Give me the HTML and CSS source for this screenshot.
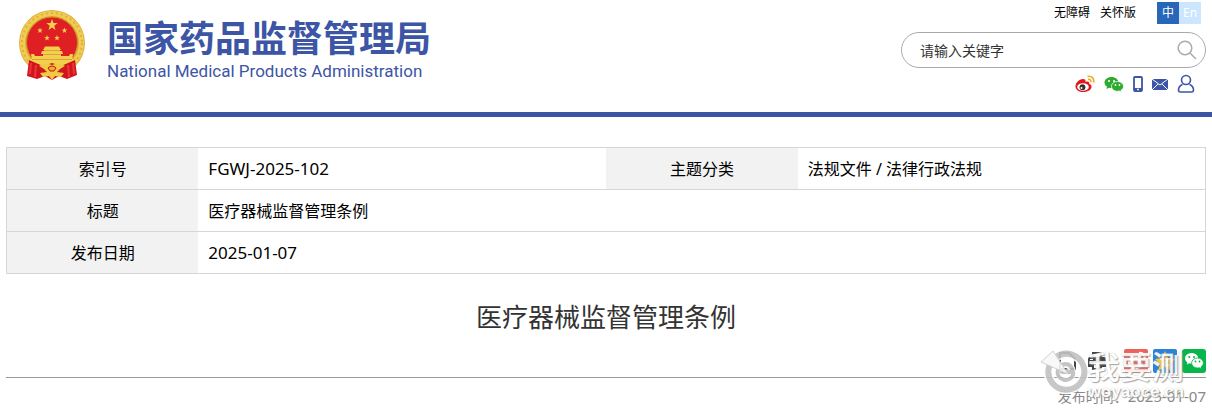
FILE: index.html
```html
<!DOCTYPE html>
<html lang="zh-CN">
<head>
    <meta charset="UTF-8">
    <meta name="viewport" content="width=device-width, initial-scale=1.0">
    <title>医疗器械监督管理条例</title>
    <link rel="stylesheet" href="styles.css">
</head>
<body>
    <header class="header">
        <a class="logo" href="#">
            <svg class="emblem" viewBox="0 0 66 71" aria-hidden="true">
                <defs>
                    <path id="star" d="M0-6 1.4-1.9 5.7-1.9 2.3.7 3.5 4.9 0 2.4-3.5 4.9-2.3.7-5.7-1.9-1.4-1.9Z"/>
                </defs>
                <circle cx="33" cy="33" r="33" fill="#dfb038"/>
                <circle cx="33" cy="33" r="29.500" fill="none" stroke="#efcd55" stroke-width="5"/>
                <circle cx="33" cy="33" r="30" fill="none" stroke="#e0b03a" stroke-width="2" stroke-dasharray="2 3"/>
                <circle cx="33" cy="32.500" r="25.500" fill="#e01f24" stroke="#c98f20"/>
                <g fill="#f3cf4e">
                    <use href="#star" x="33" y="15"/>
                    <use href="#star" transform="translate(21 20.500) scale(.5)"/>
                    <use href="#star" transform="translate(45.500 20.500) scale(.5)"/>
                    <use href="#star" transform="translate(28 28) scale(.5)"/>
                    <use href="#star" transform="translate(38 28) scale(.5)"/>
                    <path d="M26 36.500h14l2 3.500H24zM23 41h20l1 3H22zM24 44h18v4H24z"/>
                    <path d="M12 44h3l1 2h34l1-2h3l-1 6H13z"/>
                    <path d="M11 49h44l-3 6H14z"/>
                </g>
                <path d="M25 40.500h16M24 44.500h18M13 49.500h40" stroke="#dda338"/>
                <path d="M10 50 24 56 33 53 42 56 56 50 58 65 48 69 40 66 33 70 26 66 18 69 8 66Z" fill="#cf161c"/>
                <path d="M12 53l-1 11M17 55l-1 12M54 53l1 11M49 55l1 12" stroke="#ed3439" stroke-width="2"/>
                <path d="M20 56q6-4 13-1 7-3 13 1l-5 3-3 3 7 1-3 4-6-1-3 4-3-4-6 1-3-4 7-1-3-3z" fill="#f1c944"/>
                <path d="M29 58q4-4 8 0l-2 3h-4z" fill="#e9ae2e" stroke="#c8141c"/>
            </svg>
            <span class="logo-text">
                <span class="logo-cn">国家药品监督管理局</span>
                <span class="logo-en">National Medical Products Administration</span>
            </span>
        </a>

        <div class="tools">
            <div class="top-links">
                <a href="#">无障碍</a>
                <a href="#">关怀版</a>
                <div class="lang">
                    <a class="lang-cn" href="#">中</a><a class="lang-en" href="#">En</a>
                </div>
            </div>
            <form class="search">
                <input type="text" aria-label="搜索" placeholder="请输入关键字">
                <button type="button" aria-label="搜索">
                    <svg viewBox="0 0 20 20" width="20" height="20" fill="none" stroke="#aaa" stroke-width="1.500">
                        <circle cx="8" cy="8" r="6.800"/>
                        <path d="M13 13l6 6"/>
                    </svg>
                </button>
            </form>
            <nav class="social">
                <a href="#" aria-label="微博">
                    <svg viewBox="0 0 20 18" width="20" height="18">
                        <path d="M8 4C4 4 .5 8 .5 11.500S4 17 8.500 17s8-2.500 8-5.300c0-1.700-1.200-2.300-2.300-2.700.6-2-1-3-3.700-2C11 5 9.800 4 8 4z" fill="#e3141b"/>
                        <ellipse cx="8" cy="12" rx="5.800" ry="3.800" fill="#fff"/>
                        <circle cx="7.500" cy="12.200" r="2.900" fill="#333"/>
                        <circle cx="6.500" cy="13" r="1" fill="#fff"/>
                        <path d="M12.500 1.500c4-1 7 2 6 6M13 4.500c2-.4 3.300.8 2.800 2.800" fill="none" stroke="#efa928" stroke-width="1.600"/>
                    </svg>
                </a>
                <a href="#" aria-label="微信">
                    <svg viewBox="0 0 20 18" width="20" height="18">
                        <path d="M7.500 2C3.500 2 .5 4.500.5 7.500c0 1.800 1 3.200 2.500 4.200L2.500 14l2.600-1.300c.8.200 1.600.3 2.400.3 4 0 7-2.500 7-5.500S11.500 2 7.500 2z" fill="#2dab2e"/>
                        <path d="M13.500 6.500c-3.300 0-6 2.100-6 4.900s2.700 4.900 6 4.900c.7 0 1.400-.1 2-.3l2 1.200-.5-2c1.500-.9 2.500-2.200 2.500-3.800 0-2.800-2.700-4.900-6-4.900z" fill="#2dab2e" stroke="#fff" stroke-width=".8"/>
                        <g fill="#fff"><circle cx="5" cy="6" r="1"/><circle cx="10" cy="6" r="1"/><circle cx="11.500" cy="10" r=".9"/><circle cx="15.500" cy="10" r=".9"/></g>
                    </svg>
                </a>
                <a href="#" aria-label="手机版">
                    <svg viewBox="0 0 10 18" width="10" height="18">
                        <rect x="1" y="2" width="8" height="14" rx="1" fill="none" stroke="#3c55a5" stroke-width="1.800"/>
                        <path d="M1 13h8v3H1z" fill="#3c55a5"/>
                        <circle cx="5" cy="14.500" r=".9" fill="#fff"/>
                    </svg>
                </a>
                <a href="#" aria-label="邮箱">
                    <svg viewBox="0 0 16 18" width="16" height="18">
                        <path d="M0 4h16v11H0z" fill="#3c55a5"/>
                        <path d="M0 4l8 6 8-6M0 15l6-6M16 15l-6-6" fill="none" stroke="#fff"/>
                    </svg>
                </a>
                <a href="#" aria-label="用户">
                    <svg viewBox="0 0 18 20" width="18" height="20" fill="none" stroke="#3c55a5" stroke-width="1.600">
                        <circle cx="9" cy="6" r="4.500"/>
                        <path d="M5.500 10.500C3 11.500 1.500 14 1.500 16q0 2 2 2h11q2 0 2-2c0-2-1.500-4.500-4-5.500"/>
                    </svg>
                </a>
            </nav>
        </div>
    </header>

    <main class="container">
        <table class="info">
            <tr>
                <th scope="row">索引号</th>
                <td class="code">FGWJ-2025-102</td>
                <th scope="row">主题分类</th>
                <td>法规文件 / 法律行政法规</td>
            </tr>
            <tr>
                <th scope="row">标题</th>
                <td colspan="3">医疗器械监督管理条例</td>
            </tr>
            <tr>
                <th scope="row">发布日期</th>
                <td class="code" colspan="3">2025-01-07</td>
            </tr>
        </table>

        <h1>医疗器械监督管理条例</h1>

        <div class="article-meta">
            <div class="share">
                <button type="button" aria-label="收藏">
                    <svg viewBox="0 0 20 24" width="20" height="24" fill="none" stroke="#444" stroke-width="2">
                        <path d="M3 4h9l6 6v10H3z"/>
                    </svg>
                </button>
                <button type="button" class="print" aria-label="打印">
                    <svg viewBox="0 0 20 24" width="20" height="24">
                        <path d="M5 3h10v5h2q2 0 2 2v8h-4v3H5v-3H1v-8q0-2 2-2h2z" fill="#444"/>
                        <path d="M7 5h6v3H7zM7 14h6v5H7zM3 10h3v1H3z" fill="#fff"/>
                    </svg>
                </button>
                <button type="button" aria-label="分享到微博">
                    <svg viewBox="0 0 24 24" width="24" height="24">
                        <rect width="24" height="24" rx="2" fill="#ee6259"/>
                        <path d="M4 14c0-4 5-8 8-7 2 0 2 2 1 3 4-1 5 1 4 3 2 1 2 3 0 5-4 4-13 2-13-4z" fill="#fff"/>
                        <ellipse cx="11" cy="15" rx="5" ry="3" fill="#ee6259"/>
                        <path d="M15 4c4-1 7 3 5 6" fill="none" stroke="#fff" stroke-width="2"/>
                    </svg>
                </button>
                <button type="button" aria-label="分享到QQ空间">
                    <svg viewBox="0 0 24 24" width="24" height="24">
                        <rect width="24" height="24" rx="2" fill="#2b82d9"/>
                        <path d="M12 2l3 7 7 1-5 5 2 7-7-4-7 4 2-7-5-5 7-1z" fill="#fbc62d"/>
                        <path d="M7 10h9l-7 6h8" fill="none" stroke="#fff" stroke-width="1.500"/>
                    </svg>
                </button>
                <button type="button" aria-label="分享到微信">
                    <svg viewBox="0 0 24 24" width="24" height="24">
                        <rect width="24" height="24" rx="3" fill="#07b64a"/>
                        <path d="M9.500 4C6 4 3 6.300 3 9.300c0 1.700.9 3.100 2.300 4L5 15.500l2.400-1.200c4.500 1 8.800-1.300 8.800-5C16.200 6.300 13.200 4 9.500 4z" fill="#fff"/>
                        <path d="M15.500 9c-3.200 0-5.900 2.200-5.900 5s2.700 5 5.900 5c.7 0 1.300-.1 1.900-.3l2 1.100-.4-2c1.400-.9 2.400-2.200 2.400-3.800 0-2.800-2.700-5-5.900-5z" fill="#fff" stroke="#07b64a" stroke-width=".8"/>
                        <g fill="#07b64a"><circle cx="7.300" cy="8" r="1"/><circle cx="12" cy="8" r="1"/><circle cx="13.500" cy="12.500" r=".9"/><circle cx="17.500" cy="12.500" r=".9"/></g>
                    </svg>
                </button>
            </div>
            <p class="date">发布时间：<span class="date-value">2025-01-07</span></p>

            <div class="watermark">
                <svg viewBox="0 0 48 48" width="48" height="48" aria-hidden="true">
                    <g fill="none" stroke-linecap="round">
                        <path d="M16 9A18 18 0 1 1 9 19" stroke="#fff" stroke-width="9"/>
                        <path d="M16 9A18 18 0 1 1 9 19" stroke="#c2c2c2" stroke-width="6"/>
                        <path d="M20 31A8 8 0 1 0 21 17M19 25h13" stroke="#fff" stroke-width="7"/>
                        <path d="M33 27A8 8 0 1 1 25 16q7 0 8 8H22" stroke="#bdbdbd" stroke-width="4"/>
                    </g>
                    <path d="M1 14 13 3 28 26z" fill="#f8f8f8" stroke="#ccc"/>
                </svg>
                <div class="watermark-text">
                    <span class="watermark-name">我要测</span>
                    <span class="watermark-url">woyaoce.cn</span>
                </div>
            </div>
        </div>
    </main>
</body>
</html>
```
FILE: styles.css
```css
:root {
    --blue: #3c55a5;
    --line: #d6d6d6;
}

* {
    box-sizing: border-box;
}

body {
    margin: 0;
    background: #fff;
    color: #000;
    font-family: "Noto Sans", "Noto Sans CJK SC", sans-serif;
    font-size: 16px;
}

a {
    color: inherit;
    text-decoration: none;
}

button {
    padding: 0;
    border: none;
    background: none;
    cursor: pointer;
}

svg {
    display: block;
}

.header {
    display: flex;
    justify-content: space-between;
    padding: 0 6px 18px 19px;
    border-bottom: 5px solid var(--blue);
}

.logo {
    display: flex;
    gap: 22px;
    padding-top: 10px;
    color: var(--blue);
}

.emblem {
    width: 66px;
    height: 71px;
}

.logo-text {
    display: flex;
    flex-direction: column;
    padding-top: 4px;
}

.logo-cn {
    font-family: "Noto Sans CJK SC", sans-serif;
    font-size: 36px;
    font-weight: bold;
    line-height: 44px;
}

.logo-en {
    font-family: Roboto, sans-serif;
    font-size: 17px;
    line-height: 26px;
}

.tools {
    width: 305px;
}

.top-links {
    display: flex;
    justify-content: flex-end;
    gap: 10px;
    padding: 2px 5px 0 0;
    font-size: 12px;
    line-height: 22px;
}

.lang {
    display: flex;
    margin-left: 11px;
    color: #fff;
    text-align: center;
}

.lang a {
    width: 22px;
}

.lang-cn {
    background: #2866b8;
}

.lang-en {
    background: #cce6ff;
}

.search {
    display: flex;
    align-items: center;
    height: 36px;
    margin-top: 8px;
    padding: 0 8px 0 18px;
    border: 1px solid #aaa;
    border-radius: 18px;
}

.search input {
    flex: 1;
    min-width: 0;
    padding: 0;
    border: none;
    outline: none;
    font: inherit;
    font-size: 14px;
}

.search input::placeholder {
    color: #333;
}

.social {
    display: flex;
    align-items: center;
    justify-content: flex-end;
    gap: 9px;
    padding: 6px 11px 0 0;
}

.container {
    padding: 30px 6px 0;
}

.info {
    width: 100%;
    border: 1px solid var(--line);
    border-collapse: collapse;
    table-layout: fixed;
}

.info th,
.info td {
    height: 42px;
    padding: 0 10px;
    border-bottom: 1px solid var(--line);
    line-height: 24px;
}

.info th {
    width: 16%;
    background: #f2f2f2;
    font-weight: normal;
}

.info td {
    text-align: left;
}

.info .code {
    font-size: 17px;
}

h1 {
    margin: 24px 0 12px;
    color: #333;
    font-size: 26px;
    font-weight: normal;
    line-height: 38px;
    text-align: center;
}

.article-meta {
    position: relative;
}

.share {
    display: flex;
    justify-content: flex-end;
    gap: 5px;
    padding: 1px 0 4px;
    border-bottom: 1px solid #999;
}

.share .print {
    margin: 0 12px 0 5px;
}

.date {
    margin: 6px 0 0;
    color: #888;
    font-size: 14px;
    line-height: 24px;
    text-align: right;
}

.date-value {
    font-size: 15px;
}

/* sits over the share row and the date */
.watermark {
    display: flex;
    position: absolute;
    top: 0;
    right: 22px;
    opacity: 0.9;
    pointer-events: none;
}

.watermark-text {
    display: flex;
    flex-direction: column;
    color: #fff;
    text-shadow: 1px 1px 1px #999, 0 0 1px #bbb;
}

.watermark-name {
    font-size: 32px;
    font-weight: 500;
    line-height: 38px;
}

.watermark-url {
    font-family: "Liberation Sans", sans-serif;
    font-size: 17px;
    font-weight: bold;
    line-height: 12px;
}
```
